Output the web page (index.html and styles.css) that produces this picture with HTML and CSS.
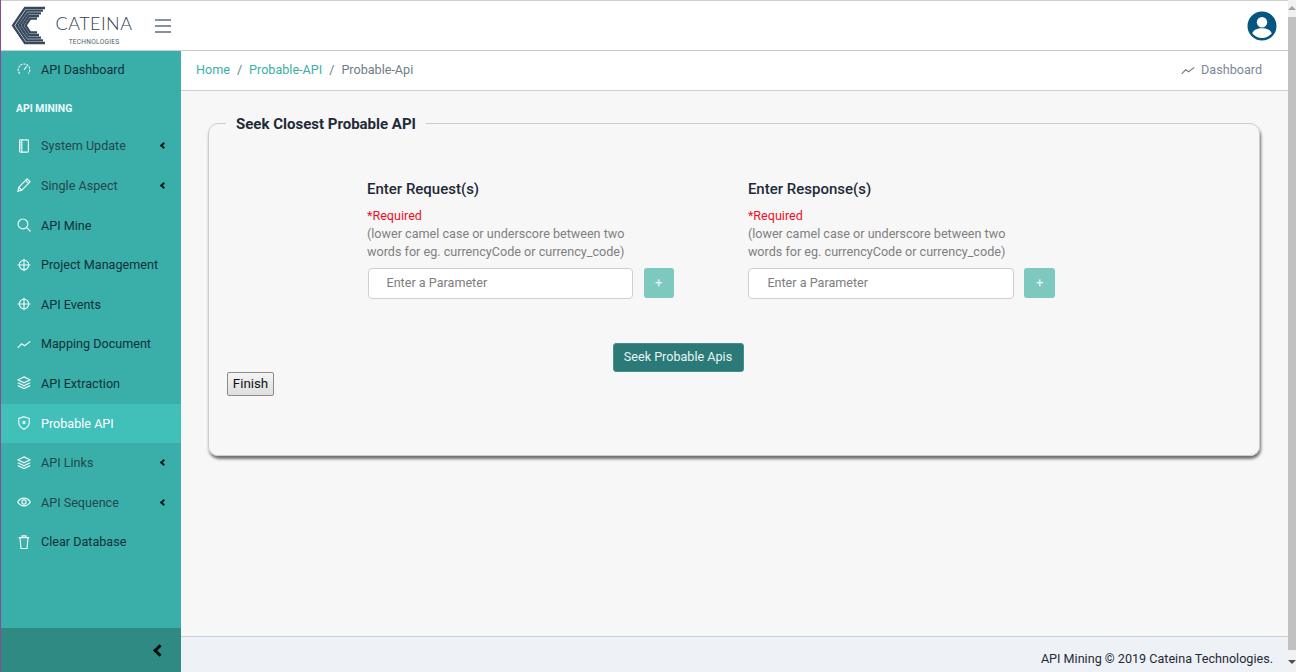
FILE: index.html
```html
<!DOCTYPE html>
<html lang="en">
<head>
<meta charset="utf-8">
<title>API Mining</title>
<link rel="stylesheet" href="styles.css">
</head>
<body>
<div class="page">
  <div class="app">
    <header class="topbar">
      <div class="brand">
        <svg class="mark" viewBox="0 0 46 50" width="46" height="50" aria-hidden="true">
          <g fill="none" stroke="#36485c" stroke-width="2.3">
            <polyline points="44,8 24,8 12,25.5 24,43 44,43"/>
            <polyline points="42,10.7 25.6,10.7 15.5,25.5 25.6,40.3 42,40.3"/>
            <polyline points="40,13.4 26.8,13.4 18.5,25.5 26.8,37.6 40,37.6"/>
            <polyline points="38,16 28,16 21.5,25.5 28,35 38,35"/>
            <polyline points="36,18.6 29.2,18.6 24.5,25.5 29.2,32.4 36,32.4"/>
          </g>
        </svg>
        <div class="wordmark">
          <span class="wordmark-name">CATEINA</span>
          <span class="wordmark-sub">TECHNOLOGIES</span>
        </div>
      </div>
      <button class="burger" aria-label="Menu"><span></span><span></span><span></span></button>
      <svg class="avatar" viewBox="0 0 30 30" width="30" height="30" aria-hidden="true">
        <circle cx="15" cy="15" r="14.5" fill="#04557f"/>
        <circle cx="15" cy="11.2" r="5.2" fill="#fff"/>
        <path d="M5.2 22.2c1.6-3.6 5-5 9.8-5s8.2 1.4 9.8 5A12.4 12.4 0 0 1 15 27a12.4 12.4 0 0 1-9.8-4.8z" fill="#fff"/>
      </svg>
    </header>
    <div class="body">
      <nav class="sidebar">
        <ul class="menu">
          <li class="item"><svg class="ico" viewBox="0 0 16 16"><path d="M3 13.2A6.6 6.6 0 1 1 13 13.2" stroke-dasharray="2.4 1.1"/><path d="M8 9l3-4"/></svg><span>API Dashboard</span></li>
          <li class="heading">API MINING</li>
          <li class="item sub"><svg class="ico" viewBox="0 0 16 16"><rect x="3" y="1" width="10" height="14" rx="1"/><path d="M5.5 1v14M3 4h1.5M3 7h1.5M3 10h1.5"/></svg><span>System Update</span><i class="caret"></i></li>
          <li class="item sub"><svg class="ico" viewBox="0 0 16 16"><path d="M1 15l1-4.4L11.5 1l3.4 3.4-9.5 9.6z"/><path d="M9.8 2.8l3.4 3.4M2 10.6l3.4 3.4"/></svg><span>Single Aspect</span><i class="caret"></i></li>
          <li class="item"><svg class="ico" viewBox="0 0 16 16"><circle cx="6.8" cy="6.8" r="5.6"/><path d="M10.8 10.8l4.6 4.6"/></svg><span>API Mine</span></li>
          <li class="item"><svg class="ico" viewBox="0 0 16 16"><circle cx="8" cy="8" r="5.4"/><path d="M8 .8v14.4M.8 8h14.4"/></svg><span>Project Management</span></li>
          <li class="item"><svg class="ico" viewBox="0 0 16 16"><circle cx="8" cy="8" r="5.4"/><path d="M8 .8v14.4M.8 8h14.4"/></svg><span>API Events</span></li>
          <li class="item"><svg class="ico" viewBox="0 0 16 16"><path d="M.8 12.5l4.5-4.7 3.4 2.2L15.2 5"/></svg><span>Mapping Document</span></li>
          <li class="item"><svg class="ico" viewBox="0 0 16 16"><path d="M8 1l7 3.4-7 3.4-7-3.4zM1 7.8l7 3.4 7-3.4M1 11l7 3.4 7-3.4"/></svg><span>API Extraction</span></li>
          <li class="item active"><svg class="ico" viewBox="0 0 16 16"><path d="M8 .8l6 1.9v4.8c0 3.4-2.6 6-6 7.7-3.4-1.7-6-4.3-6-7.7V2.700z"/><path d="M6.500 6l3 3M9.500 6l-3 3"/></svg><span>Probable API</span></li>
          <li class="item sub"><svg class="ico" viewBox="0 0 16 16"><path d="M8 1l7 3.4-7 3.4-7-3.4zM1 7.800l7 3.400 7-3.400M1 11l7 3.400 7-3.400"/></svg><span>API Links</span><i class="caret"></i></li>
          <li class="item sub"><svg class="ico" viewBox="0 0 16 16"><path d="M.8 8C2.500 5 5 3.600 8 3.600S13.500 5 15.200 8c-1.700 3-4.200 4.400-7.200 4.400S2.500 11 .8 8z"/><circle cx="8" cy="8" r="2.400"/></svg><span>API Sequence</span><i class="caret"></i></li>
          <li class="item"><svg class="ico" viewBox="0 0 16 16"><path d="M2 3h12M5.800 3V1h4.400v2M3.500 3l1 12.500h7L12.500 3"/></svg><span>Clear Database</span></li>
        </ul>
        <div class="collapse"><i class="collapse-caret"></i></div>
      </nav>
      <main class="content">
        <div class="crumbs">
          <ol class="trail">
            <li><a>Home</a></li>
            <li class="sep">/</li>
            <li><a>Probable-API</a></li>
            <li class="sep">/</li>
            <li class="current">Probable-Api</li>
          </ol>
          <div class="crumb-action">
            <svg class="ico-small" viewBox="0 0 16 16"><path d="M.8 12.5l4.500-4.700 3.400 2.200L15.200 5"/></svg>
            <span>Dashboard</span>
          </div>
        </div>
        <div class="workspace">
          <fieldset class="panel">
            <legend class="panel-title">Seek Closest Probable API</legend>
            <div class="columns">
              <section class="col">
                <h3 class="col-title">Enter Request(s)</h3>
                <p class="hint"><span class="req">*Required</span><br>(lower camel case or underscore between two<br>words for eg. currencyCode or currency_code)</p>
                <div class="field">
                  <input class="param" type="text" placeholder="Enter a Parameter">
                  <button class="add">+</button>
                </div>
              </section>
              <section class="col">
                <h3 class="col-title">Enter Response(s)</h3>
                <p class="hint"><span class="req">*Required</span><br>(lower camel case or underscore between two<br>words for eg. currencyCode or currency_code)</p>
                <div class="field">
                  <input class="param" type="text" placeholder="Enter a Parameter">
                  <button class="add">+</button>
                </div>
              </section>
            </div>
            <div class="submit-row"><button class="seek">Seek Probable Apis</button></div>
            <button class="finish">Finish</button>
          </fieldset>
        </div>
        <footer class="footer">API Mining © 2019 Cateina Technologies.</footer>
      </main>
    </div>
  </div>
  <div class="scrollbar">
    <span class="arrow up"></span>
    <span class="thumb"></span>
    <span class="arrow down"></span>
  </div>
</div>
</body>
</html>
```
FILE: styles.css
```css
* { box-sizing: border-box; }
html, body { margin: 0; height: 100%; overflow: hidden; }
body { font-family: Roboto, "Liberation Sans", sans-serif; font-size: 12.6px; color: #1f2a37; }

.page { display: flex; width: 1296px; height: 672px; }
.app { flex: 1; min-width: 0; display: flex; flex-direction: column; background: #f7f7f7; border-left: 1px solid #8a4a94; }

.topbar { height: 51px; flex: none; display: flex; align-items: center; background: #fff; border-top: 1px solid #d0d0d0; border-bottom: 1px solid #c9ced6; padding-right: 11px; }
.brand { display: flex; align-items: flex-start; width: 154px; height: 49px; }
.mark { margin-top: -1px; flex: none; }
.wordmark { display: flex; flex-direction: column; align-items: center; margin-left: 9px; width: 76px; }
.wordmark-name { font-family: Lato, sans-serif; font-weight: 300; font-size: 18px; line-height: 20px; margin-top: 12px; color: #2f4052; letter-spacing: .45px; white-space: nowrap; }
.wordmark-sub { font-family: Roboto, sans-serif; font-size: 6.6px; line-height: 8px; margin-top: 5px; color: #4d5d6d; letter-spacing: .25px; white-space: nowrap; }
.burger { width: 16px; height: 14px; padding: 0; background: none; border: 0; display: flex; flex-direction: column; justify-content: space-between; flex: none; }
.burger span { display: block; height: 2px; background: #87929e; }
.avatar { margin-left: auto; flex: none; }

.body { flex: 1; min-height: 0; display: flex; }

.sidebar { width: 180px; flex: none; display: flex; flex-direction: column; background: #3aafa9; }
.menu { list-style: none; margin: 0; padding: 0; flex: 1; }
.item { height: 39.6px; display: flex; align-items: center; padding: 0 0 1px 16px; color: #10303a; }
.item:first-child { padding-bottom: 3px; }
.item.sub { color: #24464c; }
.item.active { background: #41c0b9; color: #fff; }
.item span { margin-left: 10px; }
.ico { width: 14px; height: 14px; flex: none; fill: none; stroke: #f0fbfa; stroke-width: 1.3; }
.heading { height: 36px; padding-left: 15px; display: flex; align-items: center; font-size: 10.4px; font-weight: 700; color: #eafafa; }
.caret { margin-left: auto; margin-right: 15px; width: 5px; height: 5px; border-left: 2px solid #0c1c20; border-bottom: 2px solid #0c1c20; transform: rotate(45deg); }
.collapse { height: 44px; flex: none; background: #2e8a83; display: flex; align-items: center; justify-content: flex-end; padding-right: 17px; }
.collapse-caret { width: 9px; height: 9px; border-left: 3px solid #0a0f10; border-bottom: 3px solid #0a0f10; transform: rotate(45deg); }

.content { flex: 1; min-width: 0; display: flex; flex-direction: column; }
.crumbs { height: 40px; flex: none; display: flex; align-items: center; justify-content: space-between; background: #fff; border-bottom: 1px solid #c9ced6; padding: 0 26px 2px 15px; }
.trail { list-style: none; display: flex; gap: 7px; margin: 0; padding: 0; }
.trail a { color: #3aafa9; }
.sep, .current { color: #6f7c87; }
.crumb-action { display: flex; align-items: center; gap: 6px; color: #7c8798; }
.ico-small { width: 14px; height: 14px; fill: none; stroke: #6f7c8c; stroke-width: 1.3; }

.workspace { flex: 1; min-height: 0; padding: 22px 28px 0 27px; }
.panel { margin: 0; height: 343px; min-width: 0; padding: 0 18px; border: 1px solid #ccc; border-radius: 10px; box-shadow: 1px 3px 3px rgba(0,0,0,.55); background: #f7f7f7; }
.panel-title { margin-left: -1px; padding: 2px 10px 0; font-size: 15px; font-weight: 700; line-height: 18px; color: #1f2a37; }
.columns { display: grid; grid-template-columns: 380.9px 380.9px; margin-top: 46px; margin-left: 140px; }
.col-title { margin: 0 0 8px; font-size: 15px; font-weight: 500; line-height: 20px; color: #1f2a37; }
.hint { margin: 0 0 7px; font-size: 12.6px; line-height: 18px; color: #7f7f7f; }
.req { color: #f20f1f; }
.field { display: flex; align-items: flex-start; gap: 10.5px; padding-left: .5px; }
.param { width: 265.5px; height: 31px; border: 1px solid #cfcfcf; border-radius: 4px; background: #fff; padding: 0 18px 2px; font: 12.6px Roboto, sans-serif; color: #333; outline: 0; }
.param::placeholder { color: #7d7d7d; opacity: 1; }
.add { width: 30.5px; height: 30px; border: 0; border-radius: 3px; background: #7dc9c0; color: #eafafa; font: 13px Roboto, sans-serif; padding: 0 0 2px; }
.submit-row { display: flex; justify-content: center; margin-top: 44px; padding-right: 112px; }
.seek { width: 131px; height: 29px; border: 1px solid #46908c; border-radius: 3px; background: #2b7a78; color: #e9f5f4; font: 12.6px Roboto, sans-serif; padding: 0 0 2px; }
.finish { display: block; width: 47px; height: 24px; margin-top: 0; padding: 0 0 1px; border: 1px solid #8c8c8c; border-radius: 2px; background: linear-gradient(#f4f4f4, #dedede); color: #111; font: 13.33px Roboto, sans-serif; }

.footer { height: 36px; flex: none; background: #eef2f6; border-top: 1px solid #c9ced6; padding: 14px 15px 0 0; text-align: right; line-height: 15px; color: #1f2a37; }

.scrollbar { width: 8px; flex: none; display: flex; flex-direction: column; background: #f1f1f1; }
.thumb { flex: 1; background: #c1c1c1; }
.arrow { height: 17px; flex: none; position: relative; }
.arrow::after { content: ""; position: absolute; left: 0; width: 0; height: 0; border-left: 4px solid transparent; border-right: 4px solid transparent; }
.arrow.up::after { top: 6px; border-bottom: 4px solid #a3a3a3; }
.arrow.down { height: 22px; }
.arrow.down::after { top: 10px; border-top: 4px solid #505050; }
```
